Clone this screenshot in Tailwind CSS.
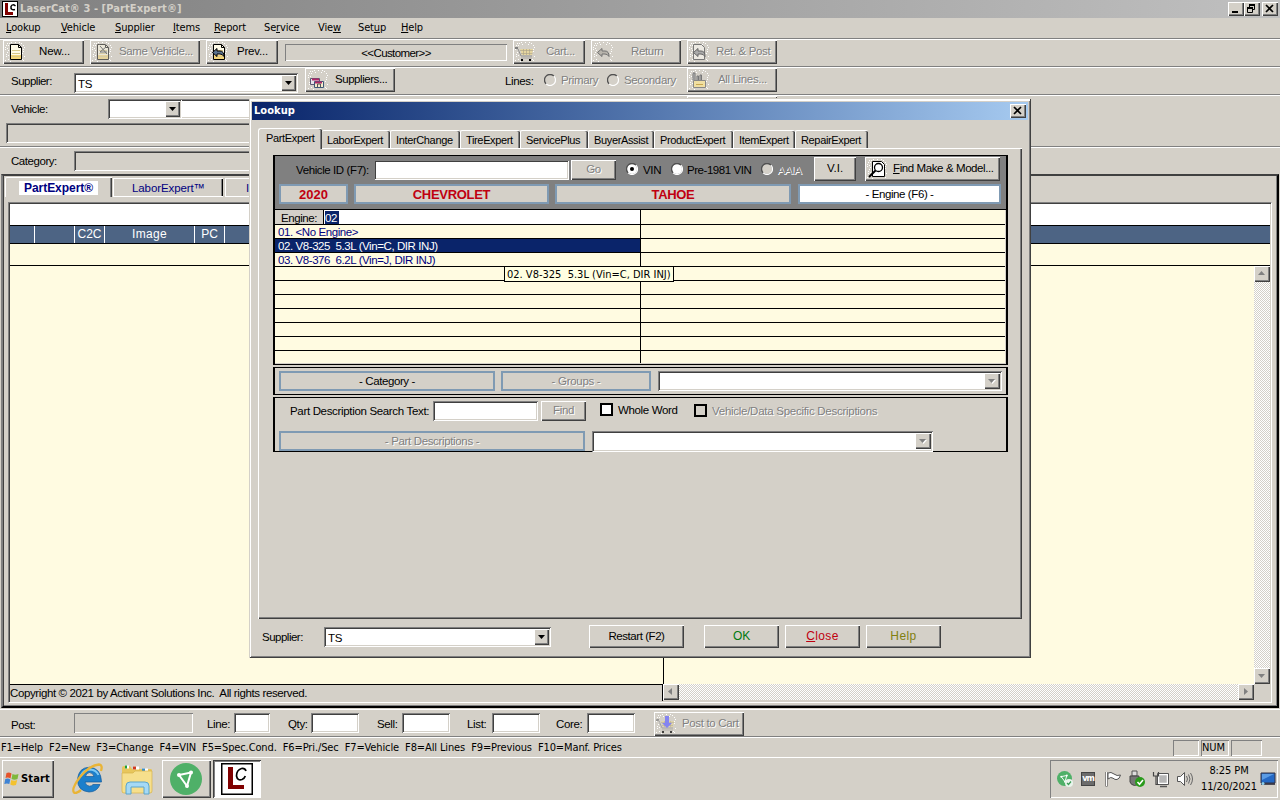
<!DOCTYPE html>
<html lang="en">
  <head>
    <meta charset="UTF-8" />
    <meta name="viewport" content="width=device-width, initial-scale=1.0" />
    <title>LaserCat 3 - PartExpert</title>
    <script src="https://cdn.jsdelivr.net/npm/@tailwindcss/browser@4"></script>
  </head>

  <body class="w-[1280px] h-[800px] overflow-hidden relative bg-[#d4d0c8] text-black font-['Liberation_Sans',Arial,sans-serif] text-[11.5px] tracking-[-0.35px] leading-[14px] whitespace-nowrap cursor-default">
    <!-- Shared icons -->
    <svg class="hidden">
      <symbol id="dust" viewBox="0 0 20 20">
        <path d="M1 3.500h1M4 1.500h1M7 2.500h1M10 .5h1M13 2.500h1M16 1.500h1M18 3.500h1M0 7.500h1M2 10.500h1M1 14.500h1M3 17.500h1M0 18.500h1M18 7.500h1M17 11.500h1M19 14.500h1M17 17.500h1M2 6.500h1M18 18.500h1M6 .5h1M14 .5h1M1 12.500h1M3 3.500h1M19 5.500h1M18 9.500h1M0 5.500h1M3 8.500h1M3 13.500h1M5 19.500h1M2 1.500h1" stroke="#fff" />
      </symbol>
      <symbol id="doc" viewBox="0 0 20 20">
        <path d="M5.500 2.500h8l3 3v12h-11z" fill="#fffbe8" stroke="#000" />
        <path d="M13.500 2.500v3h3" fill="none" stroke="#000" />
        <path d="M6 13h10v4H6z" fill="#f5d679" />
        <path d="M7 8.500h8M7 11.500h8M7 14.500h8" stroke="#d8c88a" />
      </symbol>
      <symbol id="arrow-left" viewBox="0 0 20 20">
        <path d="M4.500 10.500l4.500-4v2.500h3q4 0 4 5.500q-1.500-2.500-4-2.500h-3v2.500z" />
      </symbol>
      <symbol id="cart" viewBox="0 0 20 20">
        <path d="M0 6h3" stroke="#808080" stroke-width="2" />
        <path d="M3 7l3 7h11" fill="none" stroke="#909090" />
        <path d="M5 7h13l-1 6H7z" fill="#e6d6a0" />
        <path d="M5 8.500h13M6 11.500h12M8.500 7v6M11.500 7v6M14.500 7v6" stroke="#a8a088" stroke-width=".6" />
        <path d="M6 16h11" stroke="#a8a4a0" />
        <path d="M6 18h2M14 18h2" stroke="#000" stroke-width="2" />
      </symbol>
      <symbol id="share" viewBox="0 0 32 32">
        <circle cx="16" cy="16" r="16" fill="#4fb068" />
        <path d="M9 12L21 9.500L17 23z" fill="none" stroke="#fff" stroke-width="2" />
        <path d="M9 12m-2 0a2 2 0 1 0 4 0a2 2 0 1 0-4 0M21 9.500m-2 0a2 2 0 1 0 4 0a2 2 0 1 0-4 0M17 23m-2 0a2 2 0 1 0 4 0a2 2 0 1 0-4 0" fill="#fff" />
      </symbol>
      <symbol id="radio" viewBox="0 0 12 12">
        <circle cx="6" cy="6" r="5" />
        <path d="M2.100 9.900A5.500 5.500 0 0 1 9.900 2.100" fill="none" stroke="#505050" stroke-width="1.300" />
        <path d="M9.900 2.100A5.500 5.500 0 0 1 2.100 9.900" fill="none" stroke="#fff" stroke-width="1.200" />
      </symbol>
    </svg>

    <!-- Title bar -->
    <header class="h-[18px] flex items-center bg-linear-to-r from-[#808080] to-[#c0c0c0]">
      <div class="ml-[2px] w-4 h-4 bg-white border border-black">
        <svg class="w-[14px] h-[14px]" viewBox="0 0 14 14"><path d="M2 1h3v9h5v3H2z" fill="#800000" /><path d="M12.500 4Q9.500 1.500 8 4.500Q7.500 8.500 12 7.500" fill="none" stroke="#000" stroke-width="1.500" /></svg>
      </div>
      <h1 class="ml-[2px] w-[1208px] font-['DejaVu_Sans_Condensed','DejaVu_Sans',sans-serif] font-bold text-[11px] tracking-[0.09px] text-[#d4d0c8]">LaserCat® 3 - [PartExpert®]</h1>
      <div class="w-4 h-[14px] bg-[#d4d0c8] shadow-[inset_1px_1px_#fff,inset_-1px_-1px_#404040,inset_-2px_-2px_#808080]"><svg class="w-4 h-[14px]" viewBox="0 0 16 14"><path d="M4 10h6" stroke="#000" stroke-width="2" /></svg></div>
      <div class="w-4 h-[14px] bg-[#d4d0c8] shadow-[inset_1px_1px_#fff,inset_-1px_-1px_#404040,inset_-2px_-2px_#808080]"><svg class="w-4 h-[14px]" viewBox="0 0 16 14"><path d="M5.500 6V2.500h5v5H9M3.500 5.500h5v5h-5z" fill="none" stroke="#000" /><path d="M5 3h6M3 6h6" stroke="#000" stroke-width="2" /></svg></div>
      <div class="ml-[2px] w-4 h-[14px] bg-[#d4d0c8] shadow-[inset_1px_1px_#fff,inset_-1px_-1px_#404040,inset_-2px_-2px_#808080]"><svg class="w-4 h-[14px]" viewBox="0 0 16 14"><path d="M4 3l7 7M11 3l-7 7" stroke="#000" stroke-width="1.700" /></svg></div>
    </header>

    <!-- Menu -->
    <nav class="h-[22px] pt-[3px] pl-[6px] flex border-b border-white shadow-[inset_0_-1px_#808080] font-['DejaVu_Sans_Condensed','DejaVu_Sans',sans-serif] text-[11px] tracking-[-0.15px]">
      <div class="w-[55px]"><u>L</u>ookup</div>
      <div class="w-[54px]"><u>V</u>ehicle</div>
      <div class="w-[58px]"><u>S</u>upplier</div>
      <div class="w-[41px]"><u>I</u>tems</div>
      <div class="w-[50px]"><u>R</u>eport</div>
      <div class="w-[54px]">Se<u>r</u>vice</div>
      <div class="w-[40px]">Vie<u>w</u></div>
      <div class="w-[43px]">Set<u>u</u>p</div>
      <div><u>H</u>elp</div>
    </nav>

    <!-- Toolbar -->
    <div class="h-[28px] pl-[3px] flex items-start border-b border-white shadow-[inset_0_-1px_#808080]">
      <div class="w-[81px] h-[24px] pl-[2px] pt-[2px] flex shadow-[inset_1px_1px_#fff,inset_-1px_-1px_#404040,inset_-2px_-2px_#808080]">
        <svg class="w-5 h-5"><use href="#dust" /><use href="#doc" /></svg>
        <span class="ml-[14px] mt-[2px] tracking-[-0.15px]">New...</span>
      </div>
      <div class="ml-[6px] w-[110px] h-[24px] pl-[2px] pt-[2px] flex text-[#808080] [text-shadow:1px_1px_#fff] shadow-[inset_1px_1px_#fff,inset_-1px_-1px_#404040,inset_-2px_-2px_#808080]">
        <svg class="w-5 h-5"><use href="#dust" /><use href="#doc" opacity=".55" /><path d="M8 4l7 8M14 5l-6 5h7" fill="none" stroke="#777" /></svg>
        <span class="ml-[7px] mt-[2px] tracking-[-0.4px]">Same Vehicle...</span>
      </div>
      <div class="ml-[6px] w-[72px] h-[24px] pl-[2px] pt-[2px] flex shadow-[inset_1px_1px_#fff,inset_-1px_-1px_#404040,inset_-2px_-2px_#808080]">
        <svg class="w-5 h-5"><use href="#dust" /><use href="#doc" /><use href="#arrow-left" fill="#5a7390" stroke="#000" /></svg>
        <span class="ml-[9px] mt-[2px] tracking-[-0.2px]">Prev...</span>
      </div>
      <div class="ml-[7px] mt-[4px] w-[222px] h-[17px] pt-[2px] text-center tracking-[-0.6px] shadow-[inset_1px_1px_#808080,inset_-1px_-1px_#fff]">&lt;&lt;Customer&gt;&gt;</div>
      <div class="ml-[6px] w-[72px] h-[24px] pl-[2px] pt-[2px] flex text-[#808080] [text-shadow:1px_1px_#fff] shadow-[inset_1px_1px_#fff,inset_-1px_-1px_#404040,inset_-2px_-2px_#808080]">
        <svg class="w-5 h-5"><use href="#dust" /><use href="#cart" /></svg>
        <span class="ml-[11px] mt-[2px]">Cart...</span>
      </div>
      <div class="ml-[6px] w-[90px] h-[24px] pl-[2px] pt-[2px] flex text-[#808080] [text-shadow:1px_1px_#fff] shadow-[inset_1px_1px_#fff,inset_-1px_-1px_#404040,inset_-2px_-2px_#808080]">
        <svg class="w-5 h-5"><use href="#dust" /><use href="#arrow-left" fill="#b8b4ac" stroke="#707070" /></svg>
        <span class="ml-[18px] mt-[2px]">Return</span>
      </div>
      <div class="ml-[6px] w-[90px] h-[24px] pl-[2px] pt-[2px] flex text-[#808080] [text-shadow:1px_1px_#fff] shadow-[inset_1px_1px_#fff,inset_-1px_-1px_#404040,inset_-2px_-2px_#808080]">
        <svg class="w-5 h-5"><use href="#dust" /><path d="M4.500 2.500h8l3 3v12h-11z" fill="#ece9e2" stroke="#777" /><use href="#arrow-left" fill="#aaa" stroke="#666" /></svg>
        <span class="ml-[7px] mt-[2px]">Ret. &amp; Post</span>
      </div>
    </div>

    <!-- Supplier row -->
    <div class="h-[28px] pl-[11px] flex items-start border-b border-white shadow-[inset_0_-1px_#808080]">
      <div class="w-[63px] mt-[6px] tracking-[-0.5px]">Supplier:</div>
      <div class="mt-[5px] w-[224px] h-[20px] p-[2px] flex bg-white shadow-[inset_1px_1px_#808080,inset_-1px_-1px_#fff,inset_2px_2px_#404040,inset_-2px_-2px_#d4d0c8]">
        <span class="ml-[2px] mt-[2px] w-[203px] tracking-[-0.2px]">TS</span>
        <div class="w-[15px] h-4 bg-[#d4d0c8] shadow-[inset_1px_1px_#fff,inset_-1px_-1px_#404040,inset_-2px_-2px_#808080]"><svg class="w-4 h-4"><path d="M4 6h7L7.500 10z" /></svg></div>
      </div>
      <div class="ml-[7px] w-[90px] h-[24px] pl-[3px] pt-[2px] flex shadow-[inset_1px_1px_#fff,inset_-1px_-1px_#404040,inset_-2px_-2px_#808080]">
        <svg class="w-5 h-5"><use href="#dust" /><path d="M2.500 8.500h9v6h-9z" fill="#e8e4ea" stroke="#5c5872" /><path d="M4 9.500h7" stroke="#b02868" stroke-width="2" /><path d="M6.500 11.500h9v6h-9z" fill="#f4eccc" stroke="#3e5878" /><path d="M7 12.500h7" stroke="#b02868" stroke-width="2" /><path d="M9.500 17v-3h3v3" fill="none" stroke="#555" /></svg>
        <span class="ml-[7px] mt-[2px] tracking-[-0.45px]">Suppliers...</span>
      </div>
      <div class="ml-[110px] mt-[6px] w-[39px]">Lines:</div>
      <svg class="mt-[6px] w-3 h-3" fill="#d4d0c8"><use href="#radio" /></svg>
      <div class="ml-[5px] mt-[5px] w-[46px] text-[#808080] [text-shadow:1px_1px_#fff]">Primary</div>
      <svg class="mt-[6px] w-3 h-3" fill="#d4d0c8"><use href="#radio" /></svg>
      <div class="ml-[5px] mt-[5px] w-[63px] text-[#808080] [text-shadow:1px_1px_#fff]">Secondary</div>
      <div class="w-[90px] h-[24px] pl-[2px] pt-[2px] flex text-[#808080] [text-shadow:1px_1px_#fff] shadow-[inset_1px_1px_#fff,inset_-1px_-1px_#404040,inset_-2px_-2px_#808080]">
        <svg class="w-5 h-5"><use href="#dust" /><path d="M4 10V3h2v7M8 10V6h1.500v4M11 10V5h1.500v5" fill="#bbb" stroke="#777" /><path d="M4.500 10.500h12v7h-12z" fill="#f0dfa2" stroke="#888" /><path d="M7 14.500h7" stroke="#c8a850" /></svg>
        <span class="ml-[9px] mt-[2px] tracking-[-0.35px]">All Lines...</span>
      </div>
    </div>

    <!-- Vehicle rows -->
    <div class="h-[52px] border-b border-white shadow-[inset_0_-1px_#808080]">
      <div class="h-[27px] pl-[11px] flex items-start">
        <div class="w-[97px] mt-[6px] tracking-[-0.45px]">Vehicle:</div>
        <div class="mt-[3px] w-[74px] h-[20px] p-[2px] flex justify-end bg-white shadow-[inset_1px_1px_#808080,inset_-1px_-1px_#fff,inset_2px_2px_#404040,inset_-2px_-2px_#d4d0c8]">
          <div class="w-[15px] h-4 bg-[#d4d0c8] shadow-[inset_1px_1px_#fff,inset_-1px_-1px_#404040,inset_-2px_-2px_#808080]"><svg class="w-4 h-4"><path d="M4 6h7L7.500 10z" /></svg></div>
        </div>
        <div class="mt-[3px] w-[498px] h-[20px] bg-white shadow-[inset_0_1px_#808080,inset_0_-1px_#fff,inset_0_2px_#404040,inset_0_-2px_#d4d0c8]"></div>
        <div class="ml-[7px] w-[90px] h-[6px] shadow-[inset_1px_1px_#fff,inset_-1px_0_#404040]"></div>
      </div>
      <div class="ml-[6px] w-[771px] h-[20px] shadow-[inset_1px_1px_#808080,inset_-1px_-1px_#fff,inset_2px_2px_#404040]"></div>
    </div>
    <div class="h-[26px] pl-[11px] flex items-start">
      <div class="w-[63px] mt-[6px] tracking-[-0.45px]">Category:</div>
      <div class="mt-[3px] w-[700px] h-[20px] shadow-[inset_1px_1px_#808080,inset_-1px_-1px_#fff,inset_2px_2px_#404040]"></div>
    </div>

    <!-- Main tab control -->
    <main class="mx-[1px] w-[1278px] h-[534px] pl-[4px] pr-[3px] pt-[1px] pb-[2px] border-2 border-t-[#404040] border-l-[#808080] border-r-black border-b-black shadow-[inset_1px_0_#404040,inset_-1px_-1px_#808080]">
      <div class="h-[20px] flex items-end">
        <div class="-ml-[2px] w-[107px] h-[20px] pl-[13px] pt-[3px] rounded-tl-[2px] border-t border-l border-white shadow-[inset_-1px_0_#404040,inset_-2px_0_#808080]">
          <div class="w-[79px] h-[14px] bg-white text-center text-xs leading-[14px] font-bold tracking-[-0.05px] text-[#000080]">PartExpert®</div>
        </div>
        <div class="ml-[1px] w-[110px] h-[19px] pt-[2px] border-l border-t border-b border-white shadow-[inset_-1px_0_#000,inset_-2px_0_#808080] text-center tracking-[-0.1px] text-[#000080]">LaborExpert™</div>
        <div class="ml-[2px] w-[110px] h-[19px] pl-[20px] pt-[2px] border-l border-t border-b border-white tracking-[-0.2px] text-[#000080]">InterChange</div>
      </div>
      <div class="mt-[5px] ml-[1px] w-[1264px] h-[501px] pl-[1px] pt-[1px] pr-[1px] border-t border-l border-[#808080] border-b-white border-b border-r border-r-white shadow-[inset_1px_1px_#404040]">
        <div class="h-[21px] bg-white"></div>
        <div class="h-[19px] flex items-stretch bg-[#4d6484] border-y border-black text-[12px] tracking-[0.3px] leading-[17px] text-white text-center">
          <div class="w-[25px] border-r border-white"></div>
          <div class="w-[40px] border-r border-white"></div>
          <div class="w-[30px] border-r border-white tracking-normal">C2C</div>
          <div class="w-[90px] border-r border-white">Image</div>
          <div class="w-[30px] border-r border-white tracking-normal">PC</div>
        </div>
        <div class="h-[22px] bg-[#fffbe1] border-b border-black"></div>
        <div class="flex h-[419px] bg-[#fffbe1]">
          <div class="w-[654px] border-r border-b border-black"></div>
          <div class="flex-1"></div>
          <div class="w-4 h-[418px] flex flex-col justify-between bg-[repeating-conic-gradient(#fff_0_25%,#d4d0c8_0_50%)] [background-size:2px_2px]">
            <div class="w-4 h-4 bg-[#d4d0c8] shadow-[inset_1px_1px_#fff,inset_-1px_-1px_#404040,inset_-2px_-2px_#808080]"><svg class="w-4 h-4"><path d="M4 9h7L7.500 5z" fill="#808080" /></svg></div>
            <div class="w-4 h-4 bg-[#d4d0c8] shadow-[inset_1px_1px_#fff,inset_-1px_-1px_#404040,inset_-2px_-2px_#808080]"><svg class="w-4 h-4"><path d="M4 6h7L7.500 10z" fill="#808080" /></svg></div>
          </div>
        </div>
        <div class="flex h-[16px]">
          <div class="w-[654px] border-r border-black pt-[1px] tracking-[-0.38px] whitespace-pre">Copyright © 2021 by Activant Solutions Inc.  All rights reserved.</div>
          <div class="-mt-px h-4 w-[591px] flex justify-between bg-[repeating-conic-gradient(#fff_0_25%,#d4d0c8_0_50%)] [background-size:2px_2px]">
            <div class="w-4 h-4 bg-[#d4d0c8] shadow-[inset_1px_1px_#fff,inset_-1px_-1px_#404040,inset_-2px_-2px_#808080]"><svg class="w-4 h-4"><path d="M9 4v7L5 7.500z" fill="#808080" /></svg></div>
            <div class="w-4 h-4 bg-[#d4d0c8] shadow-[inset_1px_1px_#fff,inset_-1px_-1px_#404040,inset_-2px_-2px_#808080]"><svg class="w-4 h-4"><path d="M6 4v7L10 7.500z" fill="#808080" /></svg></div>
          </div>
          <div class="-mt-px w-4 h-[17px] bg-[#d4d0c8]"></div>
        </div>
      </div>
    </main>

    <!-- Post row -->
    <div class="mt-[1px] h-[29px] pt-[2px] pl-[11px] flex items-start border-t border-b border-white shadow-[inset_0_-1px_#808080]">
      <div class="mt-[6px] w-[63px]">Post:</div>
      <div class="mt-[1px] w-[119px] h-[20px] shadow-[inset_1px_1px_#808080,inset_-1px_-1px_#fff]"></div>
      <div class="ml-[14px] mt-[5px] w-[27px]">Line:</div>
      <div class="mt-[1px] w-[36px] h-[20px] bg-white shadow-[inset_1px_1px_#808080,inset_-1px_-1px_#fff,inset_2px_2px_#404040,inset_-2px_-2px_#d4d0c8]"></div>
      <div class="ml-[18px] mt-[5px] w-[23px]">Qty:</div>
      <div class="mt-[1px] w-[48px] h-[20px] bg-white shadow-[inset_1px_1px_#808080,inset_-1px_-1px_#fff,inset_2px_2px_#404040,inset_-2px_-2px_#d4d0c8]"></div>
      <div class="ml-[18px] mt-[5px] w-[25px]">Sell:</div>
      <div class="mt-[1px] w-[48px] h-[20px] bg-white shadow-[inset_1px_1px_#808080,inset_-1px_-1px_#fff,inset_2px_2px_#404040,inset_-2px_-2px_#d4d0c8]"></div>
      <div class="ml-[17px] mt-[5px] w-[25px]">List:</div>
      <div class="mt-[1px] w-[48px] h-[20px] bg-white shadow-[inset_1px_1px_#808080,inset_-1px_-1px_#fff,inset_2px_2px_#404040,inset_-2px_-2px_#d4d0c8]"></div>
      <div class="ml-[16px] mt-[5px] w-[31px]">Core:</div>
      <div class="mt-[1px] w-[48px] h-[20px] bg-white shadow-[inset_1px_1px_#808080,inset_-1px_-1px_#fff,inset_2px_2px_#404040,inset_-2px_-2px_#d4d0c8]"></div>
      <div class="ml-[19px] w-[90px] h-[24px] pl-[2px] pt-[2px] flex text-[#808080] [text-shadow:1px_1px_#fff] shadow-[inset_1px_1px_#fff,inset_-1px_-1px_#404040,inset_-2px_-2px_#808080]">
        <svg class="w-5 h-5"><use href="#dust" /><use href="#cart" opacity=".7" /><path d="M9 2h4v7h3l-5 5-5-5h3z" fill="#8484f0" /></svg>
        <span class="ml-[6px] mt-[2px]">Post to Cart</span>
      </div>
    </div>

    <!-- Status bar -->
    <div class="h-[20px] pl-[1px] pt-[2px] flex border-b border-white font-['DejaVu_Sans_Condensed','DejaVu_Sans',sans-serif] text-[11px] tracking-[-0.12px]">
      <div class="w-[1172px] pt-[1px] whitespace-pre">F1=Help  F2=New  F3=Change  F4=VIN  F5=Spec.Cond.  F6=Pri./Sec  F7=Vehicle  F8=All Lines  F9=Previous  F10=Manf. Prices</div>
      <div class="w-[26px] h-4 shadow-[inset_1px_1px_#808080,inset_-1px_-1px_#fff]"></div>
      <div class="ml-[2px] w-[28px] h-4 pt-[1px] pl-[1px] shadow-[inset_1px_1px_#808080,inset_-1px_-1px_#fff]">NUM</div>
      <div class="ml-[2px] w-[31px] h-4 shadow-[inset_1px_1px_#808080,inset_-1px_-1px_#fff]"></div>
    </div>

    <!-- Taskbar -->
    <footer class="h-[42px] pt-[2px] pl-[2px] flex items-start font-['DejaVu_Sans_Condensed','DejaVu_Sans',sans-serif] text-[11px]">
      <div class="w-[52px] h-[38px] pl-[2px] flex items-center shadow-[inset_1px_1px_#fff,inset_-1px_-1px_#404040,inset_-2px_-2px_#808080]">
        <svg class="w-4 h-4" viewBox="0 0 16 16"><path d="M2.500 2Q5 1 7.500 2.500L6.500 7.500Q4 6 1.500 7z" fill="#e5532b" /><path d="M8.500 3Q11 4.500 14.500 3L13.500 8Q10.500 9.500 7.500 8z" fill="#7fb83b" /><path d="M1.300 8Q4 7 6.300 8.500L5.300 13Q3 12 .3 13z" fill="#3f83d4" /><path d="M7.300 9Q10 10.500 13.200 9L12 14Q9 15 6.300 13.500z" fill="#f4c22e" /></svg>
        <b class="ml-[1px] tracking-[0.15px] text-[11px]">Start</b>
      </div>
      <svg class="ml-[16px] mt-[2px] w-[36px] h-[34px]" viewBox="0 0 36 34">
        <path d="M30 22.500Q27 30 19 30Q7.500 29 7.500 17.500Q8.500 5.500 19.500 5.200Q31 6 31.500 20H15Q15.800 24 19.500 24.200Q22 24.100 23 22.500zM15.500 14.500H24Q23 10.700 19.500 10.500Q16.300 10.700 15.500 14.500z" fill="#1c7fcb" stroke="#125a9c" stroke-width=".7" />
        <path d="M10.500 14Q13.500 7.500 20 7.500Q26.500 8 28.500 13" fill="none" stroke="#7cc8f4" stroke-width="2" />
        <path d="M31 9Q33 3 29 2.500Q20 3 10 15Q1 27 4 30.500Q6 32 11 28" fill="none" stroke="#e9b436" stroke-width="2.300" />
      </svg>
      <svg class="ml-[14px] mt-[3px] w-[34px] h-[34px]" viewBox="0 0 34 34">
        <path d="M2 5q0-2 2-2h6l2 3h19q1 0 1 2v20q0 2-2 2H4q-2 0-2-2z" fill="#e8c65b" />
        <path d="M5 4h4M13 5h6M22 7h6" stroke="#fff" stroke-width="3" />
        <path d="M5 4h2" stroke="#1c9e3c" stroke-width="3" /><path d="M13 5h3" stroke="#cf3a23" stroke-width="3" /><path d="M22 7h3" stroke="#3b8fc8" stroke-width="3" />
        <path d="M2 10h11l2-2h17v20q0 2-2 2H4q-2 0-2-2z" fill="#f6df8c" stroke="#d6b34c" stroke-width=".7" />
        <path d="M6 31V23q0-4 4-4h15q4 0 4 4v8h-5v-7H11v7z" fill="#a5d9f5" stroke="#5ba5cc" />
      </svg>
      <div class="ml-[8px] w-[49px] h-[38px] pl-[8px] pt-[3px] shadow-[inset_1px_1px_#fff,inset_-1px_-1px_#404040,inset_-2px_-2px_#808080]"><svg class="w-8 h-8"><use href="#share" /></svg></div>
      <div class="ml-[2px] w-[48px] h-[38px] pl-[8px] pt-[3px] bg-white shadow-[inset_1px_1px_#404040,inset_-1px_-1px_#fff,inset_2px_2px_#808080]">
        <svg class="w-8 h-8" viewBox="0 0 32 32"><path d="M.75.75h30.500v30.500H.75z" fill="#fff" stroke="#000" stroke-width="1.500" /><path d="M7 4h5v18h11v4H7z" fill="#800000" /><path d="M25 8Q24 5 20.500 5.500Q15.500 7 15.500 13Q16.500 18 21 16.500Q23.500 15.500 24.300 13" fill="none" stroke="#000" stroke-width="1.700" /></svg>
      </div>
      <!-- Tray -->
      <div class="ml-[789px] w-[228px] h-[38px] pl-[7px] flex items-center shadow-[inset_1px_1px_#808080,inset_-1px_-1px_#fff]">
        <svg class="w-4 h-4" viewBox="0 0 16 16"><use href="#share" width="15" height="15" /><circle cx="12" cy="12" r="4" fill="#e8f5ec" /><path d="M10 12l1.500 1.500L14 10.500" fill="none" stroke="#3b9c55" stroke-width="1.200" /></svg>
        <div class="ml-[8px] w-[14px] h-[14px] border border-[#444] bg-[#6c6c6c] text-white font-bold text-[9px] leading-[11px] tracking-[-1.2px] text-center">vm</div>
        <svg class="ml-[9px] w-[18px] h-[18px]" viewBox="0 0 18 18"><path d="M2.500 2v14.500" stroke="#555" stroke-width="2.200" /><path d="M2.500 2v14" stroke="#fff" /><path d="M4 3q3-1.500 6 1t6.500 1q-1 4-3.500 4.500q-2 .5-4-1.300T4 9z" fill="#fff" stroke="#555" /></svg>
        <svg class="ml-[6px] w-[18px] h-[18px]" viewBox="0 0 18 18"><path d="M4 1h5v5H4z" fill="#ddd" stroke="#555" /><path d="M2 6h9v7q-1 2-4.500 2.500Q3 15 2 12z" fill="#777" stroke="#444" /><circle cx="12" cy="12" r="5" fill="#2a9a1c" /><path d="M9.500 12l2 2.200L15 10" fill="none" stroke="#fff" stroke-width="1.600" /></svg>
        <svg class="ml-[6px] w-[18px] h-[18px]" viewBox="0 0 18 18"><path d="M6.500 4.500h9v9h-9z" fill="#b6b6b6" stroke="#fff" stroke-width="1.500" /><path d="M5.500 3.500h11v11h-11z" fill="none" stroke="#555" /><path d="M8 16.500h7" stroke="#555" stroke-width="1.500" /><path d="M1.500 2v4h5V2M4 6v8.500h3" fill="none" stroke="#444" stroke-width="1.200" /></svg>
        <svg class="ml-[6px] w-[18px] h-[18px]" viewBox="0 0 18 18"><path d="M1.500 6.500h3l4-4v13l-4-4h-3z" fill="#fff" stroke="#555" /><path d="M10.500 6q2 3 0 6M12.500 4.500q3 4.500 0 9M14.500 3q4 6 0 12" fill="none" stroke="#666" /></svg>
        <div class="ml-[5px] w-[60px] text-center leading-4 tracking-[-0.1px]">8:25 PM<br />11/20/2021</div>
        <svg class="ml-[1px] w-[16px] h-[16px] mt-[2px]" viewBox="0 0 16 16"><path d="M1 1h14v10H1z" fill="#2468c4" stroke="#334" /><path d="M2 2h12L2 8z" fill="#5a9be4" /><path d="M1 12h14" stroke="#223" stroke-width="1.500" /><circle cx="3" cy="11.500" r="1.500" fill="#8cd0f0" /></svg>
      </div>
    </footer>

    <!-- Lookup dialog -->
    <section class="absolute left-[249px] top-[98px] w-[782px] h-[560px] p-[3px] pt-[4px] bg-[#d4d0c8] shadow-[inset_1px_1px_#d4d0c8,inset_-1px_-1px_#404040,inset_2px_3px_#fff,inset_-2px_-2px_#808080]">
      <div class="h-[18px] pl-[2px] pr-[2px] flex items-center justify-between bg-linear-to-r from-[#0a246a] to-[#a6caf0]">
        <b class="font-['DejaVu_Sans_Condensed','DejaVu_Sans',sans-serif] text-[11px] tracking-[0.05px] text-white">Lookup</b>
        <div class="w-4 h-[14px] bg-[#d4d0c8] shadow-[inset_1px_1px_#fff,inset_-1px_-1px_#404040,inset_-2px_-2px_#808080]"><svg class="w-4 h-[14px]" viewBox="0 0 16 14"><path d="M4 3l7 7M11 3l-7 7" stroke="#000" stroke-width="1.700" /></svg></div>
      </div>

      <!-- Dialog tabs -->
      <div class="mt-[8px] pl-[6px] h-[20px] flex items-end text-[11px] tracking-[-0.35px]">
        <div class="relative z-10 w-[64px] h-[21px] -mb-[1px] pt-[2px] pl-[7px] bg-[#d4d0c8] rounded-tl-[3px] rounded-tr-[2px] border-t border-l border-white shadow-[inset_-1px_0_#404040,inset_-2px_0_#808080]">PartExpert</div>
        <div class="w-[68px] h-[18px] pt-[2px] pl-[5px] rounded-t-[2px] border-t border-white shadow-[inset_-1px_0_#404040,inset_-2px_0_#808080]">LaborExpert</div>
        <div class="w-[70px] h-[18px] pt-[2px] pl-[5px] rounded-t-[2px] border-t border-l border-white shadow-[inset_-1px_0_#404040,inset_-2px_0_#808080]">InterChange</div>
        <div class="w-[60px] h-[18px] pt-[2px] pl-[5px] rounded-t-[2px] border-t border-l border-white shadow-[inset_-1px_0_#404040,inset_-2px_0_#808080]">TireExpert</div>
        <div class="w-[68px] h-[18px] pt-[2px] pl-[5px] rounded-t-[2px] border-t border-l border-white shadow-[inset_-1px_0_#404040,inset_-2px_0_#808080]">ServicePlus</div>
        <div class="w-[66px] h-[18px] pt-[2px] pl-[5px] rounded-t-[2px] border-t border-l border-white shadow-[inset_-1px_0_#404040,inset_-2px_0_#808080]">BuyerAssist</div>
        <div class="w-[79px] h-[18px] pt-[2px] pl-[5px] rounded-t-[2px] border-t border-l border-white shadow-[inset_-1px_0_#404040,inset_-2px_0_#808080]">ProductExpert</div>
        <div class="w-[62px] h-[18px] pt-[2px] pl-[5px] rounded-t-[2px] border-t border-l border-white shadow-[inset_-1px_0_#404040,inset_-2px_0_#808080]">ItemExpert</div>
        <div class="w-[73px] h-[18px] pt-[2px] pl-[5px] rounded-t-[2px] border-t border-l border-white shadow-[inset_-1px_0_#404040,inset_-2px_0_#808080]">RepairExpert</div>
      </div>

      <div class="ml-[6px] w-[764px] h-[471px] pt-[7px] pl-[15px] shadow-[inset_1px_1px_#fff,inset_-1px_-1px_#404040,inset_-2px_-2px_#808080]">
        <!-- Vehicle selection -->
        <div class="w-[735px] h-[210px] border border-x-2 border-black">
          <div class="h-[54px] pl-[4px] bg-[#808080] border-b border-black">
            <div class="h-[28px] pt-[1px] flex items-start">
              <div class="ml-[17px] mt-[6px] w-[78px] tracking-[-0.4px]">Vehicle ID (F7):</div>
              <div class="mt-[3px] w-[195px] h-[20px] bg-white shadow-[inset_1px_1px_#808080,inset_-1px_-1px_#fff,inset_2px_2px_#404040,inset_-2px_-2px_#d4d0c8]"></div>
              <div class="ml-[2px] mt-[3px] w-[45px] h-[20px] pt-[2px] bg-[#d4d0c8] text-center tracking-[-0.3px] text-[#808080] [text-shadow:1px_1px_#fff] shadow-[inset_1px_1px_#fff,inset_-1px_-1px_#404040,inset_-2px_-2px_#808080]">Go</div>
              <svg class="ml-[10px] mt-[6px] w-3 h-3" fill="#fff"><use href="#radio" /><circle cx="6" cy="6" r="2" fill="#000" /></svg>
              <div class="ml-[5px] mt-[6px] w-[28px]">VIN</div>
              <svg class="mt-[6px] w-3 h-3" fill="#fff"><use href="#radio" /></svg>
              <div class="ml-[4px] mt-[6px] w-[74px] tracking-[-0.45px]">Pre-1981 VIN</div>
              <svg class="mt-[6px] w-3 h-3" fill="#d4d0c8"><use href="#radio" /></svg>
              <div class="ml-[4px] mt-[6px] w-[37px] text-[#808080] tracking-[-0.5px] [text-shadow:1px_1px_#fff]">AAIA</div>
              <div class="w-[42px] h-[24px] pt-[4px] bg-[#d4d0c8] text-center tracking-normal shadow-[inset_1px_1px_#fff,inset_-1px_-1px_#404040,inset_-2px_-2px_#808080]">V.I.</div>
              <div class="ml-[9px] w-[135px] h-[24px] pl-[2px] pt-[2px] flex bg-[#d4d0c8] shadow-[inset_1px_1px_#fff,inset_-1px_-1px_#404040,inset_-2px_-2px_#808080]">
                <svg class="w-5 h-5"><use href="#dust" /><path d="M5.500 2.500h9l3 3v12h-12z" fill="#fff" stroke="#000" /><circle cx="11.500" cy="8.500" r="4" fill="#fff" stroke="#000" stroke-width="1.300" /><path d="M8.500 11.500L2 18" stroke="#000" stroke-width="2" /></svg>
                <span class="ml-[6px] mt-[2px] tracking-[-0.4px]"><u>F</u>ind Make &amp; Model...</span>
              </div>
            </div>
            <div class="flex text-center leading-[15px]">
              <div class="w-[69px] h-[20px] pt-px bg-[#d4d0c8] border-2 border-[#7f9ab3] text-[#c00010] font-bold text-[13px] tracking-normal">2020</div>
              <div class="ml-[6px] w-[195px] h-[20px] pt-px bg-[#d4d0c8] border-2 border-[#7f9ab3] text-[#c00010] font-bold text-[13px] tracking-[-0.3px]">CHEVROLET</div>
              <div class="ml-[6px] w-[236px] h-[20px] pt-px bg-[#d4d0c8] border-2 border-[#7f9ab3] text-[#c00010] font-bold text-[13px] tracking-[-0.35px]">TAHOE</div>
              <div class="ml-[7px] w-[203px] h-[20px] pt-px bg-white border-2 border-[#7f9ab3] tracking-[-0.4px]">- Engine (F6) -</div>
            </div>
          </div>
          <!-- Engine list -->
          <div class="w-[730px] h-[153px] grid grid-cols-[366px_364px] bg-[#fffbe1] text-[#000080] leading-[14px] tracking-[-0.42px]">
            <div class="border-r border-black">
              <div class="h-[15px] flex border-b border-black text-black">
                <div class="w-[49px] pl-[6px] pt-px bg-[#d4d0c8] border-r border-black">Engine:</div>
                <div class="flex-1 pt-px bg-white"><div class="h-[13px] w-[14px] ml-[1px] bg-[#0a246a] text-white">02</div></div>
              </div>
              <div class="h-[14px] pl-[3px] border-b border-black">01. &lt;No Engine&gt;</div>
              <div class="h-[14px] pl-[3px] border-b border-black bg-[#0a246a] text-white whitespace-pre">02. V8-325  5.3L (Vin=C, DIR INJ)</div>
              <div class="h-[14px] pl-[3px] border-b border-black whitespace-pre">03. V8-376  6.2L (Vin=J, DIR INJ)</div>
              <div class="h-[14px] border-b border-black"></div>
              <div class="h-[14px] border-b border-black"></div>
              <div class="h-[14px] border-b border-black"></div>
              <div class="h-[14px] border-b border-black"></div>
              <div class="h-[14px] border-b border-black"></div>
              <div class="h-[14px] border-b border-black"></div>
            </div>
            <div>
              <div class="h-[15px] border-b border-black"></div>
              <div class="h-[14px] border-b border-black"></div>
              <div class="h-[14px] border-b border-black"></div>
              <div class="h-[14px] border-b border-black"></div>
              <div class="h-[14px] border-b border-black"></div>
              <div class="h-[14px] border-b border-black"></div>
              <div class="h-[14px] border-b border-black"></div>
              <div class="h-[14px] border-b border-black"></div>
              <div class="h-[14px] border-b border-black"></div>
              <div class="h-[14px] border-b border-black"></div>
            </div>
          </div>
        </div>

        <!-- Category -->
        <div class="mt-[2px] w-[735px] h-[28px] pt-[3px] pl-[4px] flex items-start border border-x-2 border-black text-center">
          <div class="w-[216px] h-[20px] pt-px border-2 border-[#7f9ab3] tracking-[-0.4px]">- Category -</div>
          <div class="ml-[6px] w-[150px] h-[20px] pt-px border-2 border-[#7f9ab3] tracking-[-0.3px] text-[#808080] [text-shadow:1px_1px_#fff]">- Groups -</div>
          <div class="ml-[7px] w-[344px] h-[20px] p-[2px] flex justify-end bg-white shadow-[inset_1px_1px_#808080,inset_-1px_-1px_#fff,inset_2px_2px_#404040,inset_-2px_-2px_#d4d0c8]">
            <div class="w-4 h-4 bg-[#d4d0c8] shadow-[inset_1px_1px_#fff,inset_-1px_-1px_#404040,inset_-2px_-2px_#808080]"><svg class="w-4 h-4"><path d="M5 7h7L8.500 11z" fill="#fff" /><path d="M4 6h7L7.500 10z" fill="#808080" /></svg></div>
          </div>
        </div>

        <!-- Part description -->
        <div class="mt-[2px] w-[735px] h-[55px] pl-[4px] border border-x-2 border-black">
          <div class="h-[33px] pt-[3px] flex items-start">
            <div class="ml-[11px] mt-[3px] w-[143px] tracking-[-0.33px]">Part Description Search Text:</div>
            <div class="w-[105px] h-[20px] bg-white shadow-[inset_1px_1px_#808080,inset_-1px_-1px_#fff,inset_2px_2px_#404040,inset_-2px_-2px_#d4d0c8]"></div>
            <div class="ml-[3px] w-[45px] h-[20px] pt-[2px] text-center text-[#808080] [text-shadow:1px_1px_#fff] shadow-[inset_1px_1px_#fff,inset_-1px_-1px_#404040,inset_-2px_-2px_#808080]">Find</div>
            <div class="ml-[14px] mt-[2px] w-[13px] h-[13px] bg-white border-2 border-black"></div>
            <div class="ml-[5px] mt-[2px] w-[76px]">Whole Word</div>
            <div class="mt-[3px] w-[13px] h-[13px] border-2 border-black"></div>
            <div class="ml-[5px] mt-[3px] tracking-[-0.27px] text-[#808080] [text-shadow:1px_1px_#fff]">Vehicle/Data Specific Descriptions</div>
          </div>
          <div class="flex items-start">
            <div class="w-[306px] h-[20px] pt-px border-2 border-[#7f9ab3] text-center tracking-[-0.35px] text-[#808080] [text-shadow:1px_1px_#fff]">- Part Descriptions -</div>
            <div class="relative ml-[7px] w-[341px] h-[21px] p-[2px] flex justify-end bg-white shadow-[inset_1px_1px_#808080,inset_-1px_-1px_#fff,inset_2px_2px_#404040,inset_-2px_-2px_#d4d0c8]">
              <div class="w-4 h-4 bg-[#d4d0c8] shadow-[inset_1px_1px_#fff,inset_-1px_-1px_#404040,inset_-2px_-2px_#808080]"><svg class="w-4 h-4"><path d="M5 7h7L8.500 11z" fill="#fff" /><path d="M4 6h7L7.500 10z" fill="#808080" /></svg></div>
            </div>
          </div>
        </div>
      </div>

      <!-- Dialog buttons -->
      <div class="mt-[6px] pl-[10px] flex items-start">
        <div class="mt-[5px] w-[62px] tracking-[-0.5px]">Supplier:</div>
        <div class="mt-[2px] w-[227px] h-[20px] p-[2px] flex bg-white shadow-[inset_1px_1px_#808080,inset_-1px_-1px_#fff,inset_2px_2px_#404040,inset_-2px_-2px_#d4d0c8]">
          <span class="ml-[2px] mt-[2px] w-[206px] tracking-[-0.2px]">TS</span>
          <div class="w-[15px] h-4 bg-[#d4d0c8] shadow-[inset_1px_1px_#fff,inset_-1px_-1px_#404040,inset_-2px_-2px_#808080]"><svg class="w-4 h-4"><path d="M4 6h7L7.500 10z" /></svg></div>
        </div>
        <div class="ml-[38px] w-[95px] h-[23px] pt-[4px] text-center tracking-[-0.45px] shadow-[inset_1px_1px_#fff,inset_-1px_-1px_#404040,inset_-2px_-2px_#808080]">Restart (F2)</div>
        <div class="ml-[20px] w-[75px] h-[23px] pt-[4px] text-xs leading-[14px] text-center tracking-[-0.2px] text-[#007a10] shadow-[inset_1px_1px_#fff,inset_-1px_-1px_#404040,inset_-2px_-2px_#808080]">OK</div>
        <div class="ml-[6px] w-[75px] h-[23px] pt-[4px] text-xs leading-[14px] text-center tracking-[0.4px] text-[#c00010] shadow-[inset_1px_1px_#fff,inset_-1px_-1px_#404040,inset_-2px_-2px_#808080]"><u>C</u>lose</div>
        <div class="ml-[6px] w-[75px] h-[23px] pt-[4px] text-xs leading-[14px] text-center tracking-[0.4px] text-[#808010] shadow-[inset_1px_1px_#fff,inset_-1px_-1px_#404040,inset_-2px_-2px_#808080]">Help</div>
      </div>
    </section>

    <!-- Row tooltip -->
    <div class="absolute left-[504px] top-[266px] w-[170px] h-[16px] pl-[2px] pt-px bg-[#ffffe1] border border-black font-['DejaVu_Sans_Condensed','DejaVu_Sans',sans-serif] text-[11px] leading-[13px] tracking-[0px] whitespace-pre">02. V8-325  5.3L (Vin=C, DIR INJ)</div>
  </body>
</html>
